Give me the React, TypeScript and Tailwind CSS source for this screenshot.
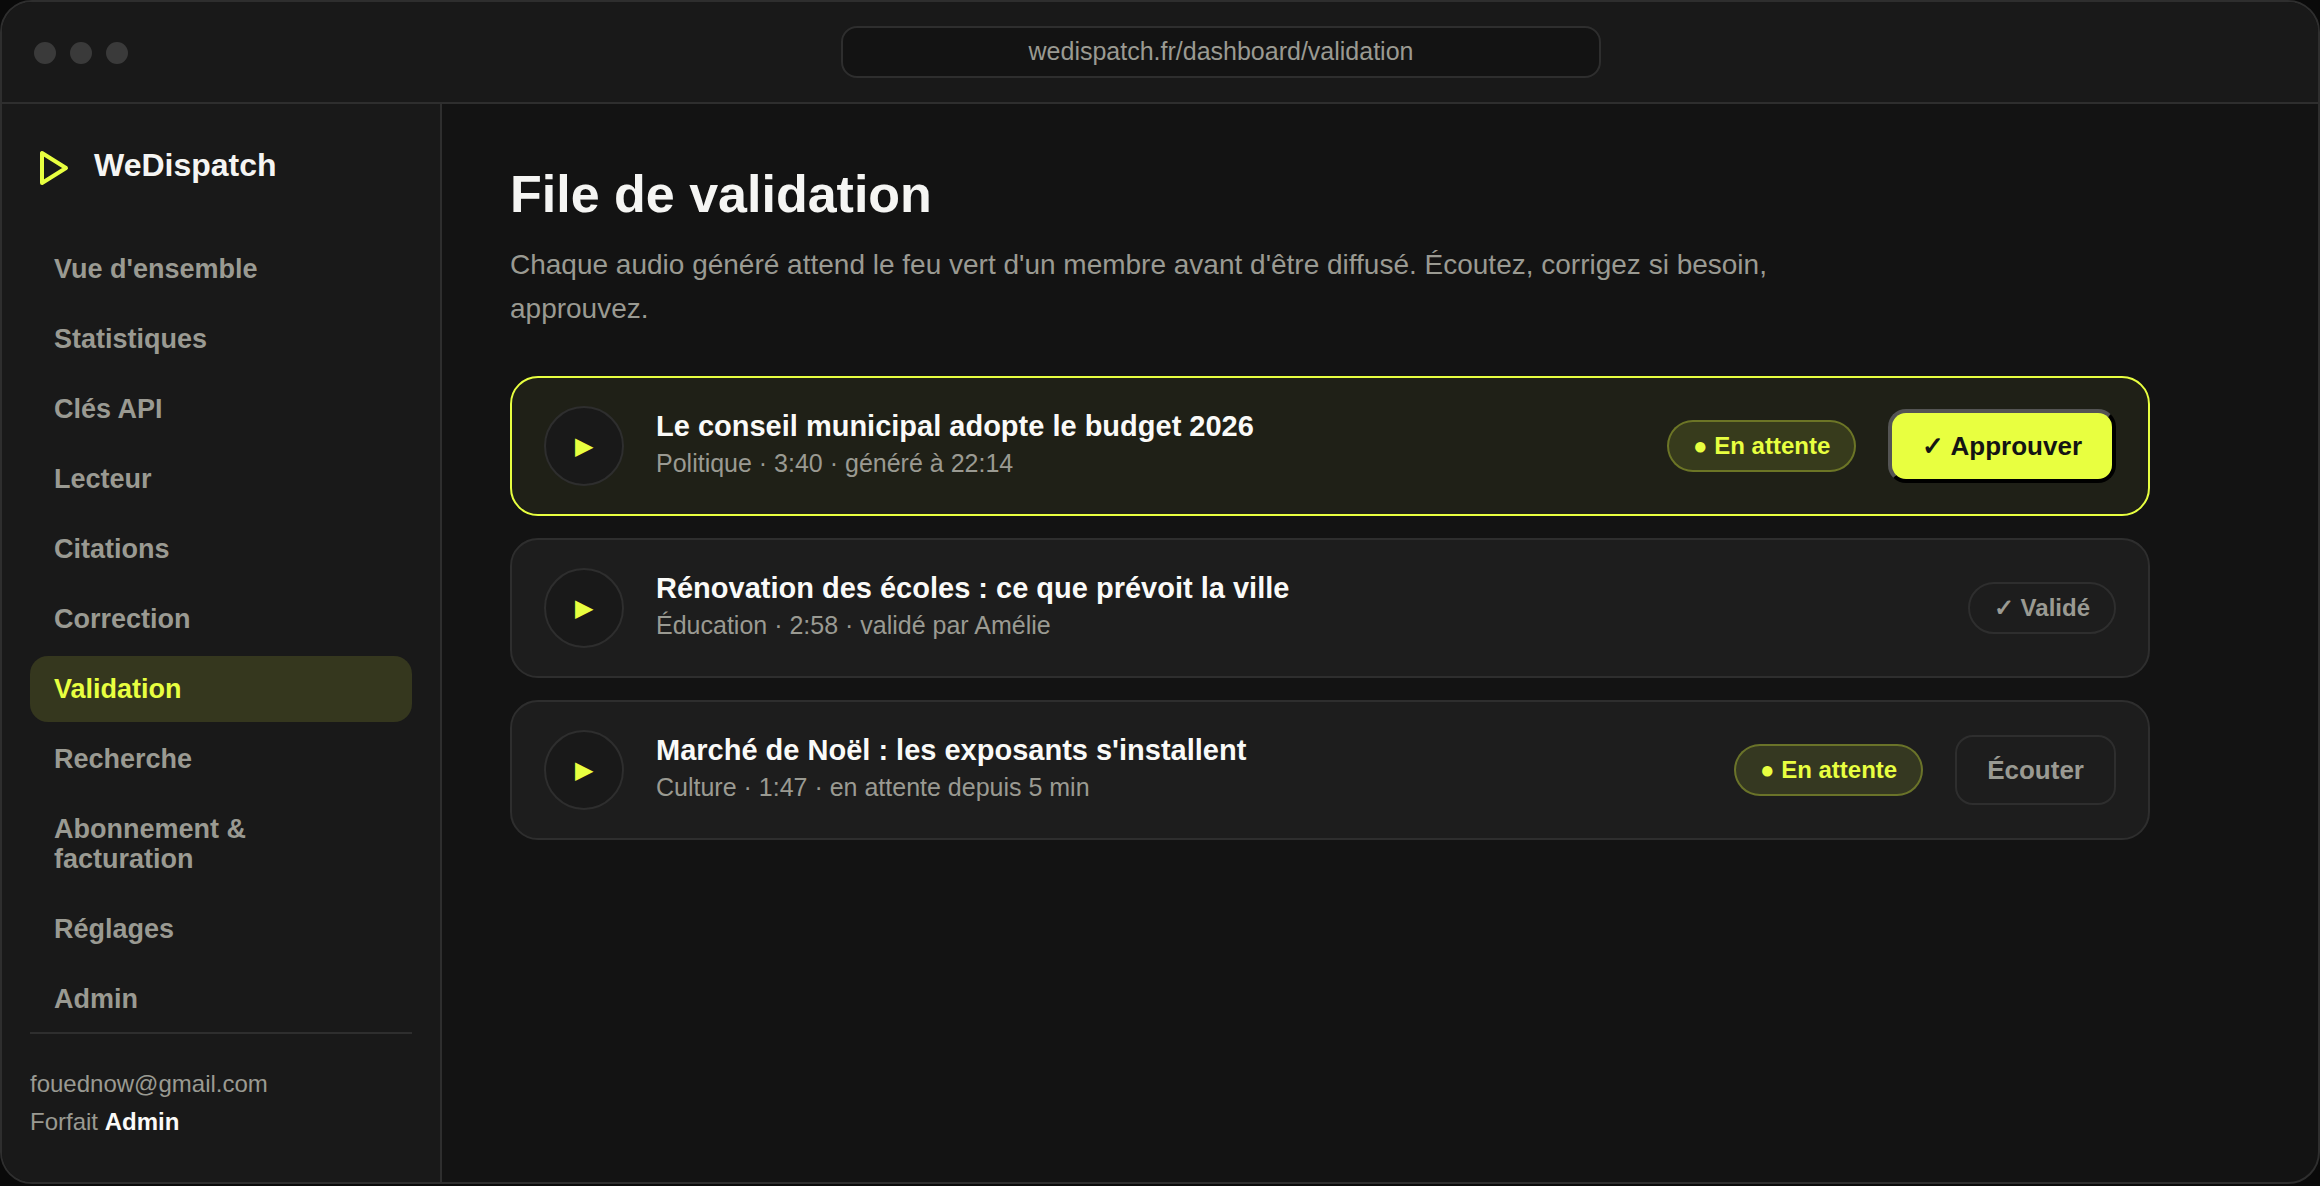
import clsx from 'clsx';

type QueueItem = {
  id: number;
  title: string;
  meta: string;
  status: 'pending' | 'approved';
  action?: 'approve' | 'listen';
};

const NAV_ITEMS = [
  "Vue d'ensemble",
  'Statistiques',
  'Clés API',
  'Lecteur',
  'Citations',
  'Correction',
  'Validation',
  'Recherche',
  'Abonnement & facturation',
  'Réglages',
  'Admin',
];

const QUEUE: QueueItem[] = [
  {
    id: 1,
    title: 'Le conseil municipal adopte le budget 2026',
    meta: 'Politique · 3:40 · généré à 22:14',
    status: 'pending',
    action: 'approve',
  },
  {
    id: 2,
    title: 'Rénovation des écoles : ce que prévoit la ville',
    meta: 'Éducation · 2:58 · validé par Amélie',
    status: 'approved',
  },
  {
    id: 3,
    title: "Marché de Noël : les exposants s'installent",
    meta: 'Culture · 1:47 · en attente depuis 5 min',
    status: 'pending',
    action: 'listen',
  },
];

function BrowserBar() {
  return (
    <header className="flex items-center gap-7 border-b-2 border-[#2e2e2e] bg-[#191919] px-8 py-6">
      <div className="flex gap-[14px] pt-[2px]">
        <span className="size-[22px] rounded-full bg-[#3a3a3a]" />
        <span className="size-[22px] rounded-full bg-[#3a3a3a]" />
        <span className="size-[22px] rounded-full bg-[#3a3a3a]" />
      </div>
      <div className="flex flex-1 justify-center">
        <div className="w-full max-w-[760px] rounded-2xl border-2 border-[#2e2e2e] bg-[#131313] pt-[9px] pb-[11px] text-center text-[25px] leading-7 text-[#9a9a92]">
          wedispatch.fr/dashboard/validation
        </div>
      </div>
    </header>
  );
}

function Sidebar() {
  return (
    <aside className="flex w-[440px] shrink-0 flex-col border-r-2 border-[#2e2e2e] bg-[#191919] px-7 pt-10 pb-[45px]">
      <div className="flex items-center gap-4">
        <svg className="size-12" viewBox="0 0 48 48" fill="none" aria-hidden="true">
          <path
            d="M12 9v30l24-15z"
            stroke="#e8ff40"
            strokeWidth="4"
            strokeLinejoin="round"
          />
        </svg>
        <span className="pb-[6px] text-[32px] leading-9 font-bold text-[#f5f5f3]">WeDispatch</span>
      </div>

      <nav className="mt-11 flex flex-col gap-1">
        {NAV_ITEMS.map((label) => (
          <a
            key={label}
            href="#"
            className={clsx(
              'rounded-[18px] px-6 py-[18px] text-[27px] leading-[30px] font-bold',
              label === 'Validation' ? 'bg-[#35371e] text-[#e8ff40]' : 'text-[#9a9a92]',
            )}
          >
            {label}
          </a>
        ))}
      </nav>

      <div className="mt-auto border-t-2 border-[#2e2e2e] pt-[31px] text-[24px] leading-[38px] text-[#9a9a92]">
        <p>fouednow@gmail.com</p>
        <p>
          Forfait <strong className="font-bold text-[#fafaf8]">Admin</strong>
        </p>
      </div>
    </aside>
  );
}

function StatusBadge({ status }: { status: QueueItem['status'] }) {
  return (
    <span
      className={clsx(
        'shrink-0 rounded-full border-2 px-6 py-[10px] text-[24px] leading-7 font-bold whitespace-nowrap',
        status === 'pending'
          ? 'border-[#e8ff40]/30 bg-[#e8ff40]/12 text-[#e8ff40]'
          : 'border-[#2e2e2e] text-[#9a9a92]',
      )}
    >
      {status === 'pending' ? '● En attente' : '✓ Validé'}
    </span>
  );
}

function QueueRow({ item }: { item: QueueItem }) {
  return (
    <li
      className={clsx(
        'flex items-center gap-8 rounded-[28px] border-2 px-8 py-7',
        item.action === 'approve' ? 'border-[#e8ff40] bg-[#1f2017]' : 'border-[#2e2e2e] bg-[#1d1d1d]',
      )}
    >
      <button
        type="button"
        aria-label={`Lire : ${item.title}`}
        className="size-20 shrink-0 rounded-full border-2 border-[#2e2e2e] bg-[#191919] text-[24px] leading-7 text-[#e8ff40]"
      >
        ▶
      </button>

      <div className="min-w-0 flex-1 pb-[3px]">
        <h2 className="text-[29px] leading-[34px] font-bold text-[#fafaf8]">{item.title}</h2>
        <p className="mt-[3px] text-[25px] leading-[34px] text-[#9a9a92]">{item.meta}</p>
      </div>

      <StatusBadge status={item.status} />

      {item.action === 'approve' && (
        <button
          type="button"
          className="shrink-0 rounded-[18px] border-4 border-t-[#545454] border-r-black border-b-black border-l-[#545454] bg-[#e8ff40] px-[30px] py-[18px] text-[26px] leading-[30px] font-bold text-[#141414]"
        >
          ✓ Approuver
        </button>
      )}
      {item.action === 'listen' && (
        <button
          type="button"
          className="shrink-0 rounded-[18px] border-2 border-[#2e2e2e] px-[30px] py-[18px] text-[26px] leading-[30px] font-bold text-[#9a9a92]"
        >
          Écouter
        </button>
      )}
    </li>
  );
}

export default function App() {
  return (
    <div className="h-screen bg-[#0a0a0a] pb-[2px] font-['Liberation_Sans',Arial,sans-serif]">
      <div className="flex h-full flex-col overflow-hidden rounded-[32px] border-2 border-[#2e2e2e] bg-[#131313]">
        <BrowserBar />
        <div className="flex min-h-0 flex-1">
          <Sidebar />
          <main className="min-w-0 flex-1 px-[68px] pt-[60px]">
            <div className="max-w-[1640px]">
              <h1 className="text-[52px] leading-[60px] font-bold text-[#f5f5f3]">File de validation</h1>
              <p className="mt-[19px] max-w-[1280px] text-[28px] leading-[44px] text-[#9a9a92]">
                Chaque audio généré attend le feu vert d'un membre avant d'être diffusé. Écoutez,
                corrigez si besoin, approuvez.
              </p>
              <ul className="mt-[45px] flex flex-col gap-[22px]">
                {QUEUE.map((item) => (
                  <QueueRow key={item.id} item={item} />
                ))}
              </ul>
            </div>
          </main>
        </div>
      </div>
    </div>
  );
}
